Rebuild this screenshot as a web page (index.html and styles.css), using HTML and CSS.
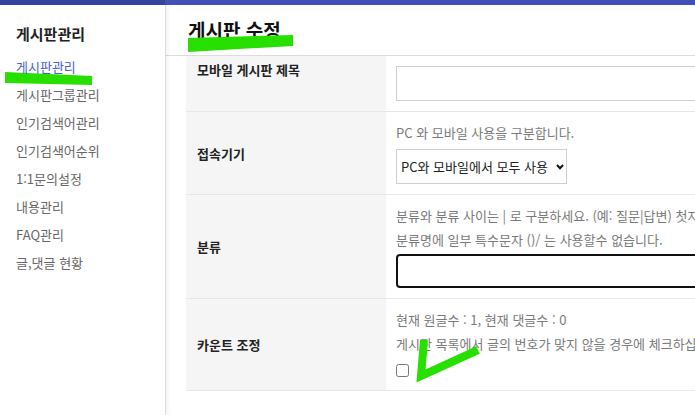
FILE: index.html
```
<!DOCTYPE html>
<html lang="ko">
<head>
<meta charset="utf-8">
<title>게시판 수정</title>
<link rel="stylesheet" href="styles.css">
</head>
<body>
<div class="topbar"><div class="topbar-side"></div></div>
<div class="layout">
  <aside class="sidebar">
    <h2 class="side-title">게시판관리</h2>
    <ul class="side-menu">
      <li class="active">게시판관리</li>
      <li>게시판그룹관리</li>
      <li>인기검색어관리</li>
      <li>인기검색어순위</li>
      <li>1:1문의설정</li>
      <li>내용관리</li>
      <li>FAQ관리</li>
      <li>글,댓글 현황</li>
    </ul>
  </aside>
  <main class="main">
    <header class="page-head"><h1 class="page-title">게시판 수정</h1></header>
    <div class="form">
      <div class="row row-first">
        <div class="label label-top">모바일 게시판 제목</div>
        <div class="field"><input class="text-input" type="text"></div>
      </div>
      <div class="row">
        <div class="label">접속기기</div>
        <div class="field">
          <p class="help">PC 와 모바일 사용을 구분합니다.</p>
          <div class="select-wrap">
            <select class="select"><option>PC와 모바일에서 모두 사용</option></select>
            <svg class="chevron" width="8" height="6" viewBox="0 0 8 6"><path d="M1 1 L4 4.2 L7 1" fill="none" stroke="#111" stroke-width="2"/></svg>
          </div>
        </div>
      </div>
      <div class="row">
        <div class="label">분류</div>
        <div class="field">
          <p class="help">분류와 분류 사이는 | 로 구분하세요. (예: 질문|답변) 첫자로 #은 입력하지 마세요. (예: #질문|#답변 [X])</p>
          <p class="help">분류명에 일부 특수문자 ()/ 는 사용할수 없습니다.</p>
          <input class="text-input focus" type="text">
        </div>
      </div>
      <div class="row">
        <div class="label">카운트 조정</div>
        <div class="field">
          <p class="help">현재 원글수 : 1, 현재 댓글수 : 0</p>
          <p class="help">게시판 목록에서 글의 번호가 맞지 않을 경우에 체크하십시오.</p>
          <input class="check" type="checkbox">
        </div>
      </div>
    </div>
  </main>
</div>
<svg class="marks" width="695" height="415" viewBox="0 0 695 415">
  <polygon points="5,72 92,76 92,85 5,83" fill="#27e000"/>
  <polygon points="188,38 293,35 293,46 188,52" fill="#27e000"/>
  <polyline points="424,340 421,376 478,350" fill="none" stroke="#27e000" stroke-width="8" stroke-linejoin="miter"/>
</svg>
</body>
</html>
```
FILE: styles.css
```
* { box-sizing: border-box; }
html, body { margin: 0; padding: 0; }
body {
  width: 695px;
  height: 415px;
  overflow: hidden;
  font-family: "Noto Sans CJK KR", "Noto Sans", sans-serif;
  font-size: 13px;
  color: #222;
  background: #fff;
  position: relative;
}
.topbar {
  height: 5px;
  background: #3f51b5;
  display: flex;
}
.topbar-side {
  width: 165px;
  background: #34469f;
}
.layout {
  display: flex;
  height: 410px;
}
.sidebar {
  width: 166px;
  flex: none;
  border-right: 1px solid #dcdcdc;
  box-shadow: 2px 0 4px rgba(0,0,0,0.05);
  padding: 19px 0 0 16px;
  position: relative;
  z-index: 1;
}
.side-title {
  margin: 0;
  font-size: 15px;
  line-height: 20px;
  font-weight: 700;
  color: #222;
}
.side-menu {
  list-style: none;
  margin: 9px 0 0;
  padding: 0;
}
.side-menu li {
  line-height: 28px;
  height: 28px;
  color: #666;
  font-size: 13px;
}
.side-menu li.active { color: #4a5fd3; }
.main {
  flex: 1;
  overflow: hidden;
  min-width: 0;
}
.page-head {
  height: 51px;
  border-bottom: 1px solid #dcdcdc;
  padding: 13px 0 0 22px;
}
.page-title {
  margin: 0;
  font-size: 19px;
  line-height: 24px;
  font-weight: 700;
  color: #111;
}
.form {
  margin-left: 20px;
  width: 820px;
}
.row {
  display: grid;
  grid-template-columns: 200px 1fr;
  border-bottom: 1px solid #e6e6e6;
}
.label {
  background: #f5f5f5;
  padding-left: 11px;
  display: flex;
  align-items: center;
  font-weight: 700;
  font-size: 13px;
  color: #222;
}
.label-top {
  align-items: flex-start;
  padding-top: 4px;
}
.field {
  padding: 9px 0 10px 10px;
}
.row-first .field { padding-top: 10px; }
.help {
  margin: 0;
  line-height: 24px;
  color: #7a7a7a;
  font-size: 13px;
  white-space: nowrap;
}
.text-input {
  display: block;
  width: 420px;
  height: 35px;
  border: 1px solid #cfcfcf;
  background: #fff;
  margin: 0;
  font: inherit;
}
.text-input.focus {
  height: 34px;
  margin-top: 2px;
  border: 2px solid #111;
  border-radius: 4px;
}
.select-wrap {
  position: relative;
  display: inline-block;
  margin-top: 4px;
  vertical-align: top;
}
.select {
  display: block;
  -webkit-appearance: none;
  appearance: none;
  width: 171px;
  height: 35px;
  border: 1px solid #cfcfcf;
  border-radius: 0;
  background: #fff;
  padding: 0 0 0 4px;
  font-family: inherit;
  font-size: 13px;
  color: #222;
}
.chevron {
  position: absolute;
  right: 3px;
  top: 15px;
}
.check {
  display: block;
  margin: 8px 0 0 0;
  width: 13px;
  height: 13px;
}
.row:last-child .field { padding-bottom: 13px; }
.marks {
  position: absolute;
  left: 0;
  top: 0;
  pointer-events: none;
}
```
